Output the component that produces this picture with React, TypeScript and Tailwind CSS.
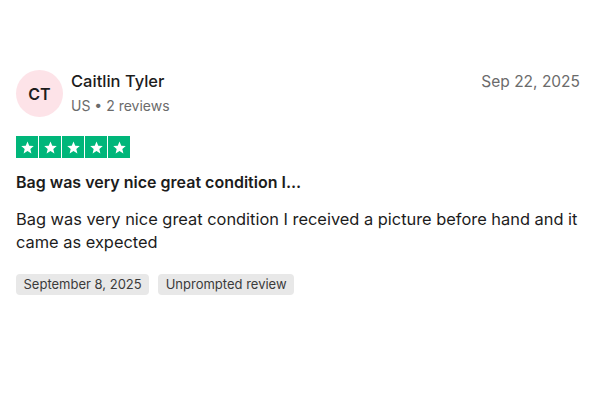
import React from "react";

function Star() {
  return (
    <div className="w-[22px] h-[22px] bg-[#00b67a] flex items-center justify-center">
      <svg viewBox="0 0 24 24" className="w-[15px] h-[15px]" fill="white">
        <path d="M12 2.5l2.8 6.6 7.2.6-5.5 4.7 1.7 7-6.2-3.8-6.2 3.8 1.7-7L2 9.7l7.2-.6z" />
      </svg>
    </div>
  );
}

export default function App() {
  return (
    <div
      className="w-[600px] h-[400px] bg-white text-[#1c1c1c] px-4 pt-[70px]"
      style={{ fontFamily: "Inter, 'Liberation Sans', sans-serif" }}
    >
      <div className="flex items-start justify-between">
        <div className="flex items-center gap-[8px]">
          <div className="w-[47px] h-[47px] rounded-full bg-[#fde3e8] flex items-center justify-center text-[16px] font-semibold text-[#1c1c1c]">
            CT
          </div>
          <div className="flex flex-col -mt-[1px]">
            <span className="text-[16.5px] leading-[22px] font-medium text-[#1c1c1c]">Caitlin Tyler</span>
            <span className="text-[14px] leading-[22px] text-[#6b6b6b] mt-[3px]">US • 2 reviews</span>
          </div>
        </div>
        <span className="text-[15.5px] leading-[22px] text-[#6b6b6b] mt-[1px] mr-1">Sep 22, 2025</span>
      </div>

      <div className="flex gap-[1px] mt-[19px]">
        <Star />
        <Star />
        <Star />
        <Star />
        <Star />
      </div>

      <h2 className="text-[16px] leading-[20px] font-semibold mt-[14px] text-[#1c1c1c]">
        Bag was very nice great condition I...
      </h2>

      <p className="text-[16.4px] leading-[23px] mt-[16px] text-[#1c1c1c] max-w-[572px]">
        Bag was very nice great condition I received a picture before hand and it came as expected
      </p>

      <div className="flex gap-[9px] mt-[20px]">
        <span className="bg-[#e8e8e8] rounded-[4px] px-[7.5px] h-[21px] flex items-center text-[13px] text-[#3b3b3b]">
          September 8, 2025
        </span>
        <span className="bg-[#e8e8e8] rounded-[4px] px-[7.5px] h-[21px] flex items-center text-[13px] text-[#3b3b3b]">
          Unprompted review
        </span>
      </div>
    </div>
  );
}
